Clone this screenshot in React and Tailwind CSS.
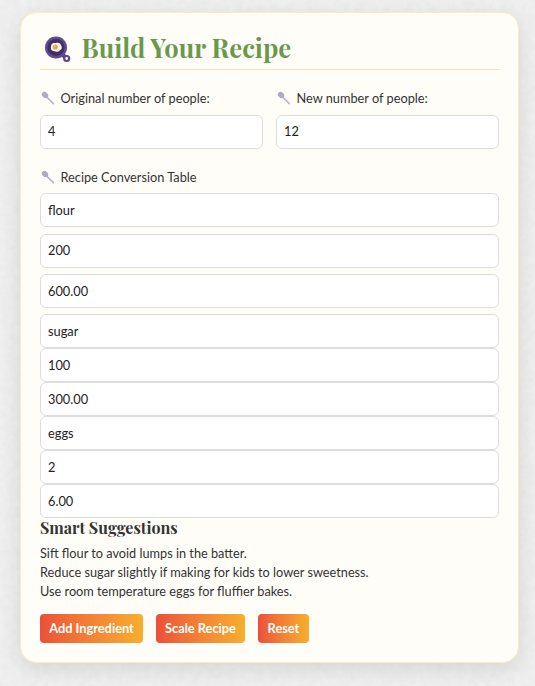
function PanIcon() {
  return (
    <svg viewBox="0 0 28 28" className="h-7 w-7 shrink-0">
      <path d="M19.500 19.500l3 3" stroke="#5d4590" strokeWidth="4.400" />
      <circle cx="23.700" cy="23.500" r="2.500" fill="#fffdf8" stroke="#5d4590" strokeWidth="2.200" />
      <circle cx="13" cy="12.500" r="11" fill="#604892" />
      <circle cx="13" cy="12.500" r="8.500" fill="#41305f" />
      <path d="M8.200 10.500c.4-2.600 3.200-2.800 4.700-2.400 2-.8 4.600-.2 5 2.100 1.600 1.600 1 4.600-1.300 5.200-1.600 2-4.500 1.500-5.600.6-2.200.2-3.900-2-2.800-5.500z" fill="#fff5fb" />
      <circle cx="12.300" cy="12" r="2.600" fill="#f6a030" />
      <circle cx="11.700" cy="11.300" r=".9" fill="#ffc663" />
    </svg>
  );
}

function SpoonIcon() {
  return (
    <svg viewBox="0 0 14 14" className="h-3.5 w-3.5 shrink-0">
      <path d="M4.500 4.800L12.400 12.600" stroke="#beb6ca" strokeWidth="1.700" strokeLinecap="round" />
      <ellipse cx="4" cy="4" rx="3.400" ry="2.700" transform="rotate(43 4 4)" fill="#b2a8c2" />
    </svg>
  );
}

function Label({ children }) {
  return (
    <div className="flex h-5 items-center gap-[5.500px] pl-px text-[12.750px] leading-5">
      <SpoonIcon />
      <span>{children}</span>
    </div>
  );
}

function Field({ value, raised = false }) {
  return (
    <input
      defaultValue={value}
      aria-label={value}
      className={`${raised ? "pb-[2px]" : ""} block h-[34px] w-full rounded-[6px] border border-[#dddddd] bg-white px-[7px] text-[12.8px] text-[#222222] outline-none`}
    />
  );
}

function Button({ children, width }) {
  return (
    <button className={`${width} h-[29px] whitespace-nowrap rounded-[4px] bg-linear-to-r from-[#eb5038] to-[#f7ae2d] text-[12.8px] font-bold text-white`}>
      {children}
    </button>
  );
}

export default function App() {
  return (
    <main className="relative isolate h-[686px] w-full overflow-hidden bg-[#eff0ef] pl-[20px] pt-[12px] font-['Lato',sans-serif] text-[#333333]">
      <svg className="absolute inset-0 -z-10 h-full w-full opacity-10">
        <filter id="paper" colorInterpolationFilters="sRGB">
          <feTurbulence type="fractalNoise" baseFrequency=".14" numOctaves="3" seed="4" />
          <feColorMatrix type="matrix" values=".3 0 0 0 .74 .3 0 0 0 .75 .3 0 0 0 .74 0 0 0 0 1" />
        </filter>
        <rect width="100%" height="100%" filter="url(#paper)" />
      </svg>

      <section className="h-[651px] w-[499px] rounded-[16px] border border-[#fde8c6] bg-[#fffdf8] px-[19px] pt-[15px] shadow-[0_6px_22px_rgba(0,0,0,0.11)]">
        <header className="flex h-[42px] items-center gap-[10.500px] border-b border-[#fae0b5] pl-[3px]">
          <PanIcon />
          <h1 className="whitespace-nowrap pb-[1px] font-['Playfair_Display','Liberation_Serif',serif] text-[25.6px] font-bold leading-none text-[#6a994e]">Build Your Recipe</h1>
        </header>

        <div className="mt-[18px] grid grid-cols-2 gap-[13px]">
          <div>
            <Label>Original number of people:</Label>
            <div className="mt-[7px]"><Field value="4" raised /></div>
          </div>
          <div>
            <Label>New number of people:</Label>
            <div className="mt-[7px]"><Field value="12" raised /></div>
          </div>
        </div>

        <div className="mt-[18px]">
          <Label>Recipe Conversion Table</Label>
        </div>
        <div className="mt-[6.4px] flex flex-col gap-[6.300px]">
          <Field value="flour" />
          <Field value="200" raised />
          <Field value="600.00" />
          <div>
            <Field value="sugar" />
            <Field value="100" />
            <Field value="300.00" />
            <Field value="eggs" />
            <Field value="2" />
            <Field value="6.00" />
          </div>
        </div>

        <h2 className="h-[25.700px] font-['Playfair_Display','Liberation_Serif',serif] text-[16px] font-bold leading-[20px]">Smart Suggestions</h2>
        <div className="text-[12.720px] leading-[19px]">
          <p>Sift flour to avoid lumps in the batter.</p>
          <p>Reduce sugar slightly if making for kids to lower sweetness.</p>
          <p>Use room temperature eggs for fluffier bakes.</p>
        </div>
        <div className="mt-[13px] flex gap-[13px]">
          <Button width="w-[103px]">Add Ingredient</Button>
          <Button width="w-[89px]">Scale Recipe</Button>
          <Button width="w-[51px]">Reset</Button>
        </div>
      </section>
    </main>
  );
}
